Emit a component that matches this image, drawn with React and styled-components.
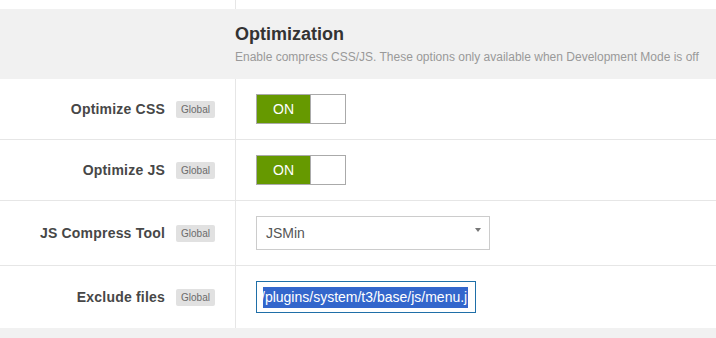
import React from 'react';
import styled, { createGlobalStyle } from 'styled-components';

const GlobalStyle = createGlobalStyle`
  body {
    margin: 0;
    background: #fff;
    font-family: "Liberation Sans", Arial, sans-serif;
  }
`;

const Page = styled.div`
  width: 716px;
  height: 338px;
  overflow: hidden;
  background: #f1f1f1;
`;
const Row = styled.div`
  display: grid;
  grid-template-columns: 236px 1fr;
  background: #fff;
  border-bottom: ${(p) => (p.$last ? 'none' : '1px solid #e6e6e6')};
`;
const LabelCell = styled.div`
  display: flex;
  align-items: center;
  justify-content: flex-end;
  gap: 11px;
  padding-right: 20px;
  border-right: 1px solid #e6e6e6;
  height: ${(p) => (p.$h ? `${p.$h}px` : 'auto')};
`;
const FieldCell = styled.div`
  display: flex;
  align-items: center;
  padding: 15px 0 15px 20px;
`;
const Label = styled.span`
  font-size: 14px;
  font-weight: bold;
  color: #474747;
  letter-spacing: 0.2px;
`;
const Badge = styled.span`
  display: inline-flex;
  align-items: center;
  justify-content: center;
  width: 39px;
  height: 17px;
  border-radius: 2px;
  background: #e1e1e1;
  color: #6b6b6b;
  font-size: 10px;
`;
const Header = styled.header`
  padding: 14px 0 0 235px;
  height: 70px;
  box-sizing: border-box;
  background: #f1f1f1;
`;
const Title = styled.h2`
  margin: 0;
  font-size: 18px;
  font-weight: bold;
  color: #333;
  line-height: 22px;
`;
const Subtitle = styled.p`
  margin: 4px 0 0;
  font-size: 12px;
  color: #999;
  line-height: 16px;
`;
const Toggle = styled.div`
  display: flex;
  width: 90px;
  height: 30px;
  box-sizing: border-box;
  border: 1px solid #aaa;
  background: #fff;
`;
const ToggleOn = styled.span`
  display: flex;
  align-items: center;
  justify-content: center;
  width: 53px;
  background: #669900;
  border-right: 1px solid #aaa;
  color: #fff;
  font-size: 14px;
`;
const Select = styled.div`
  position: relative;
  display: flex;
  align-items: center;
  width: 234px;
  height: 34px;
  box-sizing: border-box;
  padding-left: 9px;
  border: 1px solid #ccc;
  color: #555;
  font-size: 14px;
`;
const Caret = styled.span`
  position: absolute;
  right: 8px;
  top: 11px;
  width: 0;
  height: 0;
  border-left: 3px solid transparent;
  border-right: 3px solid transparent;
  border-top: 4px solid #777;
`;
const Input = styled.div`
  display: flex;
  align-items: center;
  width: 220px;
  height: 32px;
  box-sizing: border-box;
  padding-left: 6px;
  border: 1px solid #1f6fa8;
  overflow: hidden;
  white-space: nowrap;
`;
const Selected = styled.span`
  background: #3366cc;
  color: #fff;
  font-size: 14px;
  line-height: 21px;
  padding-right: 1px;
  text-indent: -2px;
  display: inline-block;
`;

function SettingRow({ label, last, children }) {
  return (
    <Row $last={last}>
      <LabelCell>
        <Label>{label}</Label>
        <Badge>Global</Badge>
      </LabelCell>
      <FieldCell>{children}</FieldCell>
    </Row>
  );
}

export default function App() {
  return (
    <Page>
      <GlobalStyle />
      <Row $last>
        <LabelCell $h={9} />
        <div />
      </Row>
      <Header>
        <Title>Optimization</Title>
        <Subtitle>Enable compress CSS/JS. These options only available when Development Mode is off</Subtitle>
      </Header>
      <SettingRow label="Optimize CSS">
        <Toggle><ToggleOn>ON</ToggleOn></Toggle>
      </SettingRow>
      <SettingRow label="Optimize JS">
        <Toggle><ToggleOn>ON</ToggleOn></Toggle>
      </SettingRow>
      <SettingRow label="JS Compress Tool">
        <Select>
          JSMin
          <Caret />
        </Select>
      </SettingRow>
      <SettingRow label="Exclude files" last>
        <Input>
          <Selected>/plugins/system/t3/base/js/menu.j</Selected>
        </Input>
      </SettingRow>
    </Page>
  );
}
